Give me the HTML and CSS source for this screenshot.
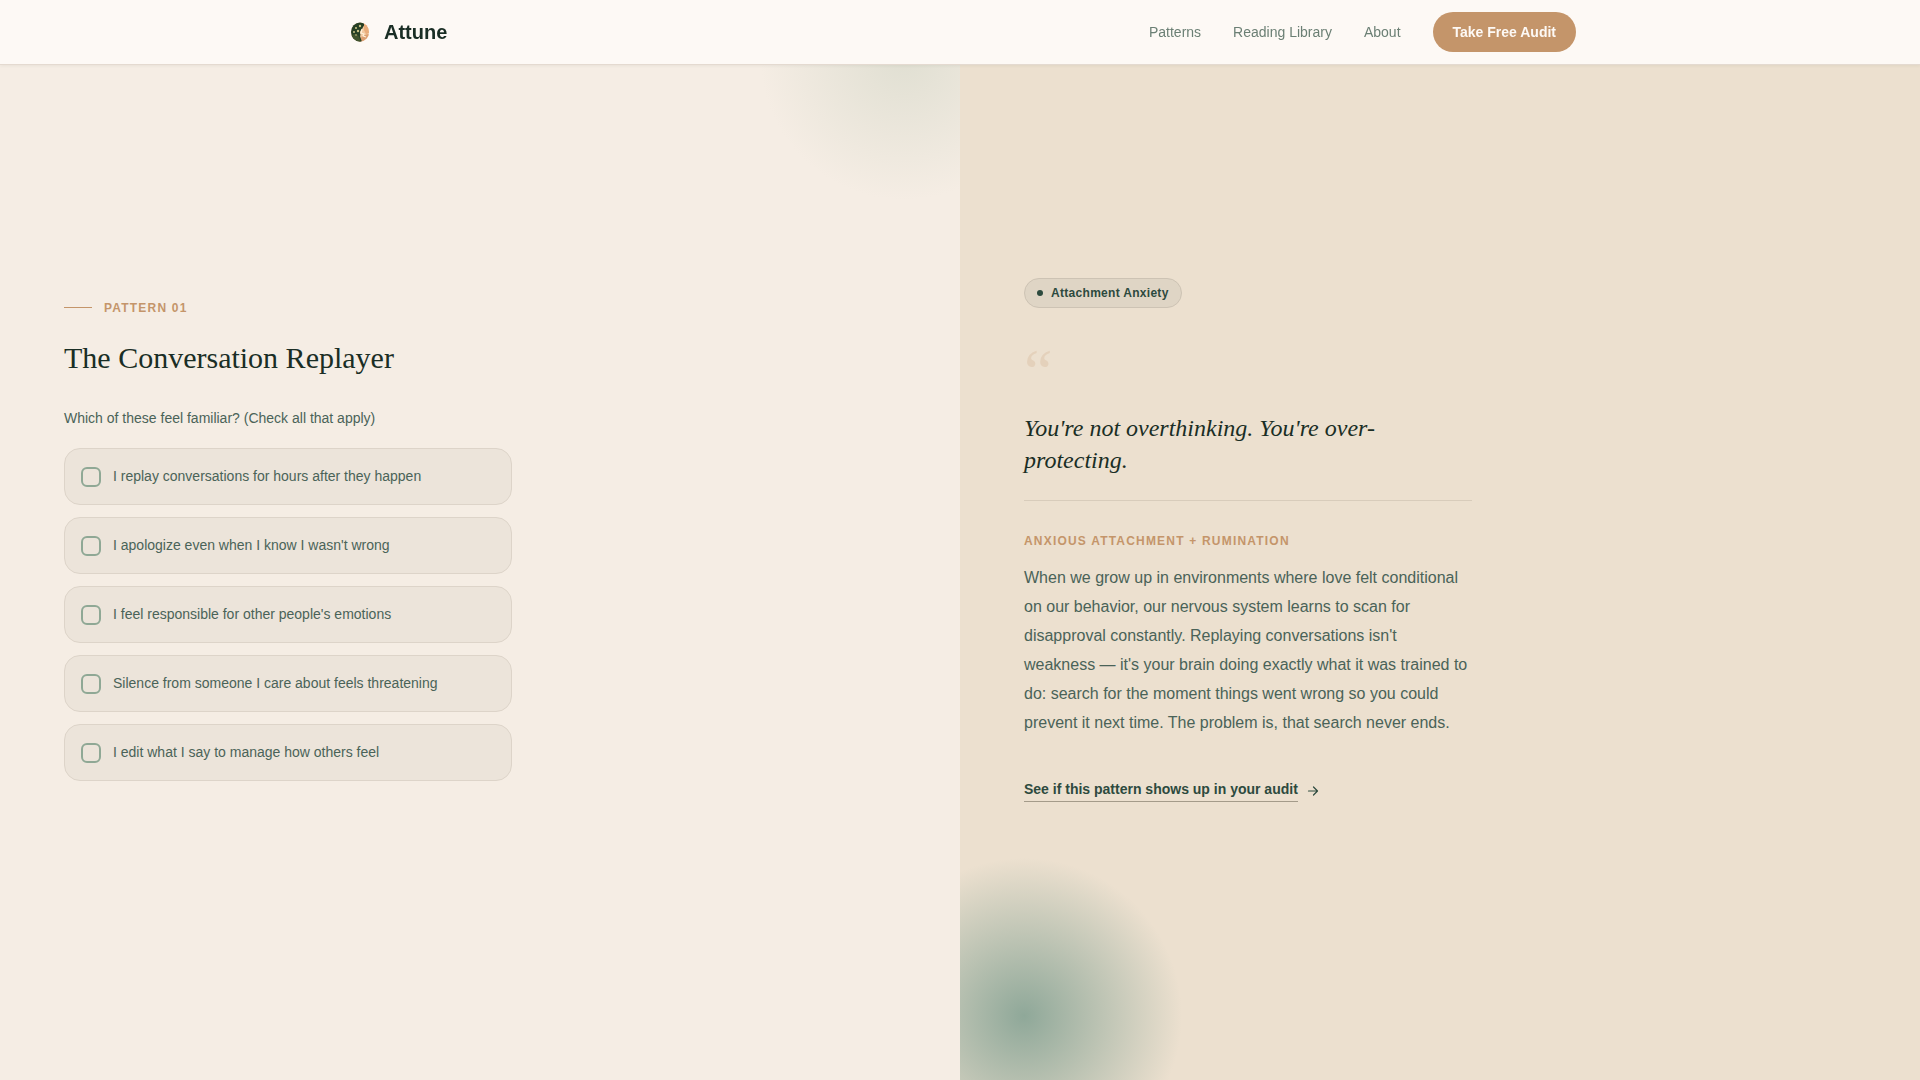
FILE: index.html
```html
<!DOCTYPE html>
<html lang="en">
<head>
	<meta charset="UTF-8">
	<meta name="viewport" content="width=device-width, initial-scale=1">
	<title>Attune</title>
	<link rel="stylesheet" href="styles.css">
</head>
<body>
<header class="header">
	<div class="header-inner">
		<a class="brand" href="#">
			<svg class="brand-logo" viewBox="0 0 32 32" aria-hidden="true">
				<defs>
					<clipPath id="logo-clip"><ellipse cx="16" cy="16" rx="9" ry="9.5"/></clipPath>
				</defs>
				<g clip-path="url(#logo-clip)">
					<rect width="32" height="32" fill="#f3c9a0"/>
					<path d="M20 6c4 2 6 6 5 11l-3 1-2-4z" fill="#e9ad7b"/>
					<path d="M25 18c-3 0-5 2-7 2l-3 6h10z" fill="#dca072"/>
					<path d="M6 5h12c2 2 3 4 1 6 0 2-3 3-3 5 0 2 1 3 0 4l2 6H6z" fill="#263f24"/>
					<path d="M8 19c3-2 6-1 7 2l2 5H9z" fill="#40532d"/>
					<path d="M18 13l-1 4 3 1-1 2 3 1" fill="none" stroke="#fff0d9" stroke-width="1.2"/>
					<g fill="#c9c285">
						<circle cx="12" cy="12" r="1.1"/>
						<circle cx="16" cy="10" r="1.2"/>
						<circle cx="10" cy="16" r="1"/>
						<circle cx="14" cy="15" r="1.2"/>
						<circle cx="12" cy="19" r=".8"/>
					</g>
				</g>
			</svg>
			<span>Attune</span>
		</a>
		<nav class="nav">
			<a class="nav-link" href="#patterns">Patterns</a>
			<a class="nav-link" href="#library">Reading Library</a>
			<a class="nav-link" href="#about">About</a>
			<a class="nav-btn" href="#audit">Take Free Audit</a>
		</nav>
	</div>
</header>
<main class="pattern" id="patterns">
	<section class="panel panel-left">
		<div class="content">
			<p class="eyebrow label">Pattern 01</p>
			<h1 class="title">The Conversation Replayer</h1>
			<fieldset class="checks">
				<legend class="question">Which of these feel familiar? (Check all that apply)</legend>
				<div class="options">
					<label class="option"><input class="box" type="checkbox"><span>I replay conversations for hours after they happen</span></label>
					<label class="option"><input class="box" type="checkbox"><span>I apologize even when I know I wasn't wrong</span></label>
					<label class="option"><input class="box" type="checkbox"><span>I feel responsible for other people's emotions</span></label>
					<label class="option"><input class="box" type="checkbox"><span>Silence from someone I care about feels threatening</span></label>
					<label class="option"><input class="box" type="checkbox"><span>I edit what I say to manage how others feel</span></label>
				</div>
			</fieldset>
		</div>
	</section>
	<section class="panel panel-right">
		<div class="content">
			<span class="badge">Attachment Anxiety</span>
			<div class="mark" aria-hidden="true">“</div>
			<blockquote class="quote">You're not overthinking. You're over-protecting.</blockquote>
			<div class="insight">
				<h2 class="label">Anxious Attachment + Rumination</h2>
				<p class="text">When we grow up in environments where love felt conditional on our behavior, our nervous system learns to scan for disapproval constantly. Replaying conversations isn't weakness — it's your brain doing exactly what it was trained to do: search for the moment things went wrong so you could prevent it next time. The problem is, that search never ends.</p>
			</div>
			<a class="more" href="#audit">
				<span class="more-text">See if this pattern shows up in your audit</span>
				<svg class="arrow" viewBox="0 0 14 14" aria-hidden="true"><path d="M2.500 7h9M7.500 3L11.500 7l-4 4"/></svg>
			</a>
		</div>
	</section>
</main>
</body>
</html>
```

FILE: styles.css
```css
* {
	box-sizing: border-box;
	margin: 0;
	padding: 0;
}

body {
	font-family: "Liberation Sans", Arial, sans-serif;
	font-size: 14px;
	line-height: 20px;
	color: #4a6358;
	background: #f5ede4;
}

a {
	color: inherit;
	text-decoration: none;
}

/* header */
.header {
	position: fixed;
	top: 0;
	left: 0;
	right: 0;
	z-index: 10;
	background: #fdf9f5;
	border-bottom: 1px solid #e4dad0;
	box-shadow: 0 1px 3px rgba(26, 46, 37, .06);
}

.header-inner {
	display: flex;
	align-items: center;
	justify-content: space-between;
	max-width: 1280px;
	height: 64px;
	margin: 0 auto;
	padding: 0 24px;
}

.brand {
	display: flex;
	align-items: center;
	gap: 8px;
	font-size: 20px;
	font-weight: bold;
	color: #1a2e25;
}

.brand-logo {
	width: 32px;
	height: 32px;
}

.nav {
	display: flex;
	align-items: center;
	gap: 32px;
}

.nav-link {
	color: #6b7f74;
}

.nav-btn {
	padding: 10px 20px;
	border-radius: 20px;
	font-weight: bold;
	color: #fdf9f5;
	background: #c4956a;
}

/* panels */
.pattern {
	display: grid;
	grid-template-columns: 1fr 1fr;
	min-height: 100vh;
}

.panel {
	display: flex;
	align-items: center;
	padding: 96px 64px;
}

.panel-left {
	background: radial-gradient(circle 144px at calc(100% - 56px) 56px, #e0dfd2, rgba(224, 223, 210, 0)) #f5ede4;
}

.panel-right {
	background: radial-gradient(circle 158px at 64px calc(100% - 64px), #8fa899, rgba(143, 168, 153, 0)) #ece0cf;
}

.content {
	width: 100%;
	max-width: 448px;
}

.label {
	font-size: 12px;
	font-weight: bold;
	line-height: 16px;
	letter-spacing: 1.2px;
	text-transform: uppercase;
	color: #c4956a;
}

.eyebrow {
	display: flex;
	align-items: center;
	gap: 12px;
	margin-bottom: 24px;
}

.eyebrow::before {
	content: "";
	width: 28px;
	height: 1px;
	background: #c4956a;
}

.title {
	margin-bottom: 32px;
	font-family: "Liberation Serif", Georgia, serif;
	font-size: 30px;
	font-weight: normal;
	line-height: 36px;
	color: #1a2e25;
}

.checks {
	border: 0;
}

.question {
	margin-bottom: 20px;
}

.options {
	display: grid;
	gap: 12px;
}

.option {
	display: flex;
	align-items: flex-start;
	gap: 12px;
	padding: 16px;
	border: 1px solid #ddd4c9;
	border-radius: 16px;
	line-height: 23px;
	background: #ece4da;
	cursor: pointer;
}

.box {
	appearance: none;
	flex: none;
	width: 20px;
	height: 20px;
	margin-top: 2px;
	border: 2px solid #8fa895;
	border-radius: 6px;
}

.box:checked {
	background: #8fa895;
}

.badge {
	display: inline-flex;
	align-items: center;
	gap: 8px;
	margin-bottom: 32px;
	padding: 6px 12px;
	border: 1px solid #cdc3b4;
	border-radius: 15px;
	font-size: 12px;
	font-weight: bold;
	line-height: 16px;
	letter-spacing: .3px;
	color: #2d4a3e;
	background: #dfd5c5;
}

.badge::before {
	content: "";
	width: 6px;
	height: 6px;
	border-radius: 50%;
	background: #2d4a3e;
}

.mark {
	margin-bottom: 8px;
	font-family: "Liberation Serif", Georgia, serif;
	font-size: 64px;
	line-height: 64px;
	color: #e4d1bb;
}

.quote {
	margin-bottom: 24px;
	font-family: "Liberation Serif", Georgia, serif;
	font-size: 24px;
	font-style: italic;
	line-height: 32px;
	color: #1a2e25;
}

.insight {
	margin-bottom: 42px;
	padding-top: 32px;
	border-top: 1px solid #d8ccbb;
}

.text {
	margin-top: 14px;
	font-size: 16px;
	line-height: 29px;
}

.more {
	display: inline-flex;
	align-items: center;
	gap: 8px;
	font-weight: bold;
	color: #2d4a3e;
}

.more-text {
	padding-bottom: 2px;
	border-bottom: 1px solid #a49b8a;
}

.arrow {
	width: 14px;
	height: 14px;
	fill: none;
	stroke: #2d4a3e;
	stroke-width: 1.2;
	stroke-linecap: round;
	stroke-linejoin: round;
}
```
